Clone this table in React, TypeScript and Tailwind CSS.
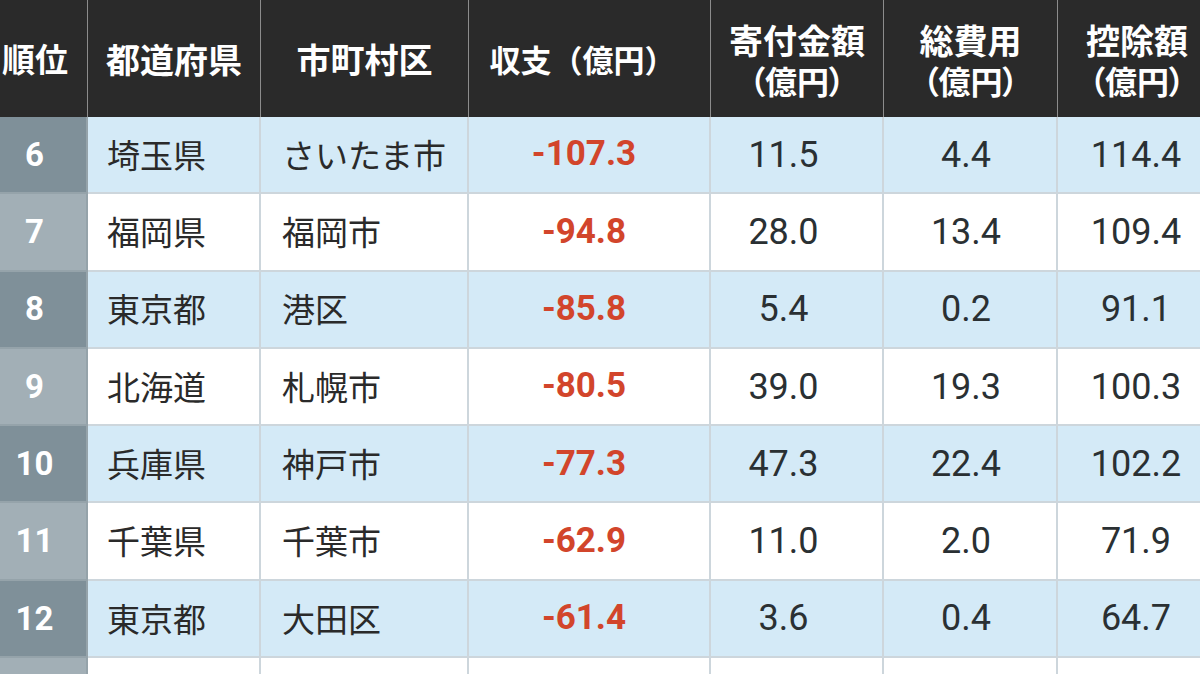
import React from "react";

type Row = {
  rank: number;
  pref: string;
  city: string;
  balance: string;
  donation: string;
  cost: string;
  deduction: string;
};

const rows: Row[] = [
  { rank: 6, pref: "埼玉県", city: "さいたま市", balance: "-107.3", donation: "11.5", cost: "4.4", deduction: "114.4" },
  { rank: 7, pref: "福岡県", city: "福岡市", balance: "-94.8", donation: "28.0", cost: "13.4", deduction: "109.4" },
  { rank: 8, pref: "東京都", city: "港区", balance: "-85.8", donation: "5.4", cost: "0.2", deduction: "91.1" },
  { rank: 9, pref: "北海道", city: "札幌市", balance: "-80.5", donation: "39.0", cost: "19.3", deduction: "100.3" },
  { rank: 10, pref: "兵庫県", city: "神戸市", balance: "-77.3", donation: "47.3", cost: "22.4", deduction: "102.2" },
  { rank: 11, pref: "千葉県", city: "千葉市", balance: "-62.9", donation: "11.0", cost: "2.0", deduction: "71.9" },
  { rank: 12, pref: "東京都", city: "大田区", balance: "-61.4", donation: "3.6", cost: "0.4", deduction: "64.7" },
];

const cols = "grid grid-cols-[88px_173px_208px_242px_173px_174px_158px]";
const jp = "font-['Noto_Sans_CJK_JP','Noto_Sans',sans-serif]";
const num = "font-['Roboto','Noto_Sans',sans-serif]";

function HeaderCell({ children, className = "" }: { children: React.ReactNode; className?: string }) {
  return (
    <div
      className={`flex flex-col items-center justify-center border-r border-[#8c8c8c] text-white font-bold [font-feature-settings:'palt'] ${jp} ${className}`}
    >
      {children}
    </div>
  );
}

function BodyRow({ row, index }: { row: Row; index: number }) {
  const blue = index % 2 === 0;
  const bg = blue ? "bg-[#d4eaf7]" : "bg-white";
  const rankBg = blue ? "bg-[#7f9099]" : "bg-[#a2afb6]";
  const cell = `flex items-center border-r-2 border-b-2 border-[#cdd6dc] ${bg}`;
  return (
    <div className={`${cols} h-[77.3px]`}>
      <div className={`flex items-center justify-center pr-[17px] border-r-2 border-b-2 border-[#95a3aa] ${rankBg} text-white font-bold text-[33px] ${num}`}>
        {row.rank}
      </div>
      <div className={`${cell} pl-[19px] text-[33px] text-[#2a2a2a] ${jp}`}>{row.pref}</div>
      <div className={`${cell} pl-[21px] text-[33px] text-[#2a2a2a] ${jp}`}>{row.city}</div>
      <div className={`${cell} justify-center pr-[10px] text-[35px] font-bold text-[#d2452b] ${num}`}>{row.balance}</div>
      <div className={`${cell} justify-center pr-[26px] text-[36px] text-[#2a3033] ${num}`}>{row.donation}</div>
      <div className={`${cell} justify-center pr-[8px] text-[36px] text-[#2a3033] ${num}`}>{row.cost}</div>
      <div className={`${cell} justify-center text-[36px] text-[#2a3033] ${num}`}>{row.deduction}</div>
    </div>
  );
}

export default function App() {
  return (
    <div className="w-[1200px] h-[674px] overflow-hidden bg-white">
      <div className="w-[1216px]">
        <div className={`${cols} h-[117px] bg-[#2a2a2a] text-[34px] leading-[41px]`}>
          <HeaderCell className="pr-[17px] text-[33px]">
            <span>順位</span>
          </HeaderCell>
          <HeaderCell className="!items-start pl-[18px]">
            <span>都道府県</span>
          </HeaderCell>
          <HeaderCell>
            <span>市町村区</span>
          </HeaderCell>
          <HeaderCell className="pr-[14px] text-[31px] [font-feature-settings:normal]">
            <span>収支（億円）</span>
          </HeaderCell>
          <HeaderCell className="pt-[2px]">
            <span>寄付金額</span>
            <span className="text-[32px]">（億円）</span>
          </HeaderCell>
          <HeaderCell className="pt-[2px]">
            <span>総費用</span>
            <span className="text-[32px]">（億円）</span>
          </HeaderCell>
          <HeaderCell className="border-r-0 pt-[2px]">
            <span>控除額</span>
            <span className="text-[32px]">（億円）</span>
          </HeaderCell>
        </div>
        {rows.map((r, i) => (
          <BodyRow key={r.rank} row={r} index={i} />
        ))}
        <div className={`${cols} h-[77px]`}>
          <div className="bg-[#a2afb6] border-r-2 border-[#95a3aa]" />
          <div className="bg-white border-r-2 border-[#cdd6dc]" />
          <div className="bg-white border-r-2 border-[#cdd6dc]" />
          <div className="bg-white border-r-2 border-[#cdd6dc]" />
          <div className="bg-white border-r-2 border-[#cdd6dc]" />
          <div className="bg-white border-r-2 border-[#cdd6dc]" />
          <div className="bg-white" />
        </div>
      </div>
    </div>
  );
}
